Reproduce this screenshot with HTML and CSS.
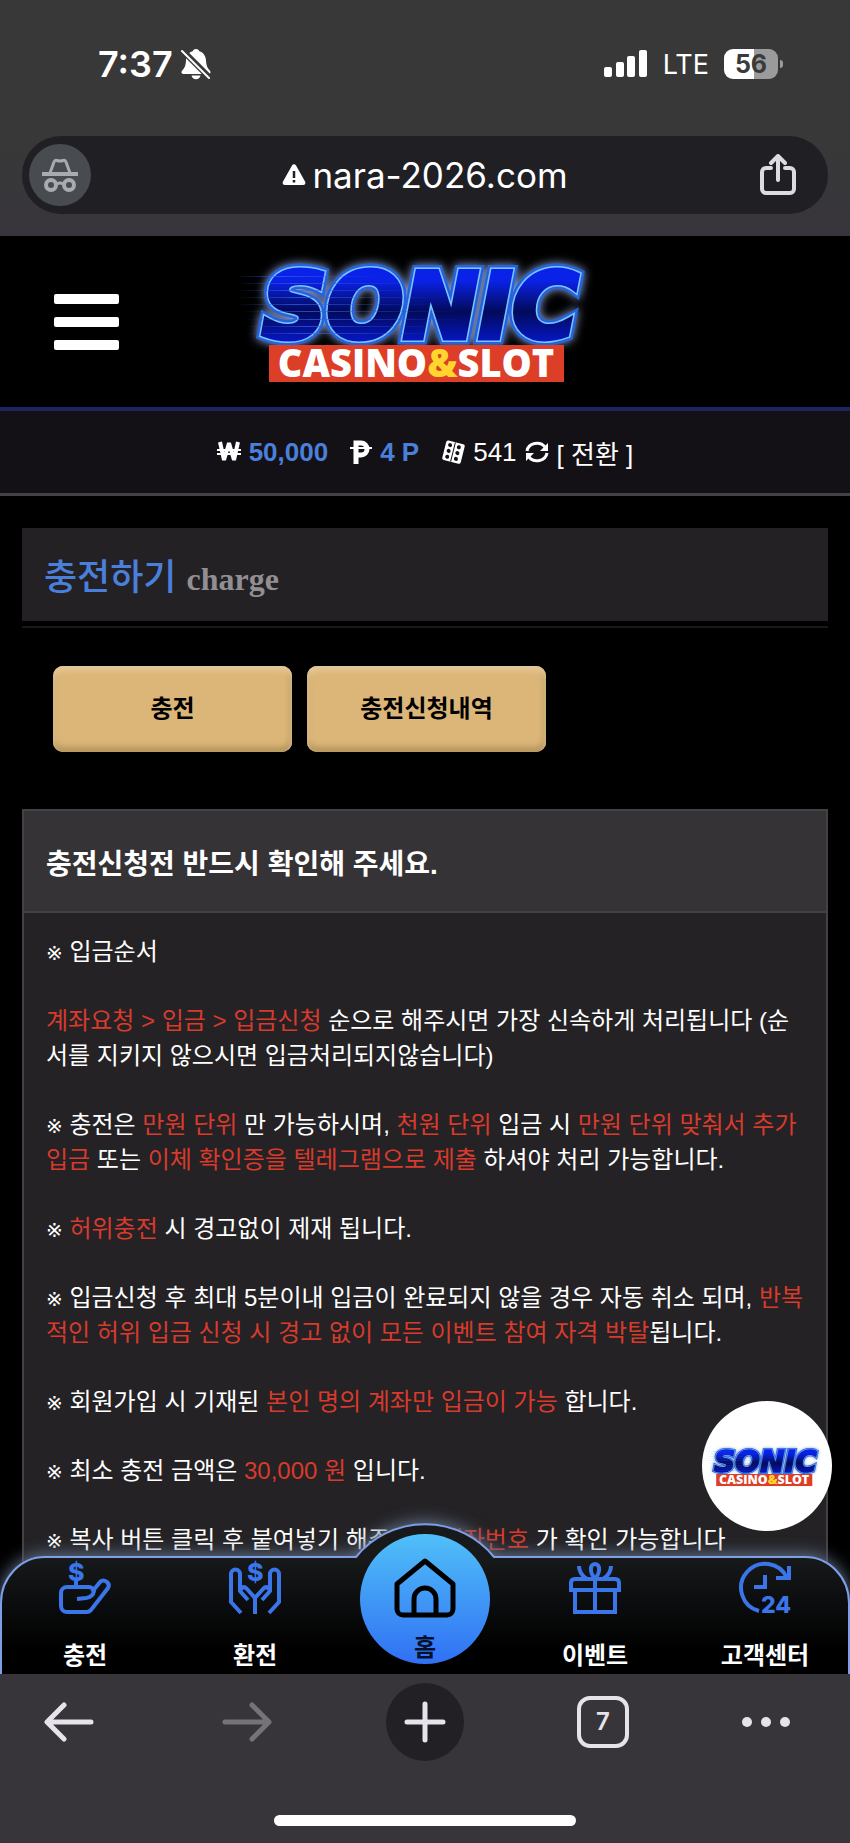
FILE: index.html
```html
<!DOCTYPE html>
<html lang="ko">
<head>
  <meta charset="UTF-8">
  <meta name="viewport" content="width=device-width, initial-scale=1.0">
  <title>충전하기</title>
  <link rel="stylesheet" href="styles.css">
</head>
<body>

<div class="phone">

  <div class="browser-top">
    <div class="status">
      <div class="status-left">
        <span>7:37</span>
        <svg width="30" height="32" viewBox="0 0 30 32">
          <path fill="#fff" d="M15 1c-2 0-3 1-3.300 2.300C7.500 4.600 5.200 8 5 12.500c-.2 5-1.400 7.500-3.600 9.800C-.3 24.200.5 26 2.500 26h25c2 0 2.800-1.800 1.100-3.700-2.200-2.300-3.400-4.800-3.600-9.800-.2-4.500-2.500-7.900-6.700-9.200C18 2 17 1 15 1zM10.500 27.500h9c-.4 2.300-2.200 3.800-4.500 3.800s-4.100-1.500-4.500-3.800z"/>
          <path stroke="#383838" stroke-width="6" d="M0 1L30 31"/>
          <path stroke="#fff" stroke-width="2" stroke-linecap="round" d="M1 3L28 30"/>
        </svg>
      </div>
      <div class="status-right">
        <svg width="44" height="28" viewBox="0 0 44 28" fill="#fff">
          <rect x="0" y="17" width="8" height="10" rx="2"/>
          <rect x="12" y="12" width="8" height="15" rx="2"/>
          <rect x="23" y="6" width="8" height="21" rx="2"/>
          <rect x="35" y="0" width="8" height="27" rx="2"/>
        </svg>
        <span class="lte">LTE</span>
        <span class="battery">56</span>
        <span class="battery-tip"></span>
      </div>
    </div>

    <div class="address">
      <span class="incognito">
        <svg width="38" height="36" viewBox="0 0 38 36" fill="none" stroke="#a9abae" stroke-width="3">
          <path d="M9 16l4-11c.5-1.500 1.500-2 3-1.500 2 .8 4 .8 6 0 1.500-.5 2.500 0 3 1.500l4 11"/>
          <path d="M1 17h36" stroke-width="4"/>
          <circle cx="10" cy="28" r="5" stroke-width="4"/>
          <circle cx="28" cy="28" r="5" stroke-width="4"/>
          <path d="M16 27q3-2 6 0"/>
        </svg>
      </span>
      <a class="url" href="#">
        <svg width="24" height="24" viewBox="0 0 24 24">
          <path fill="#fff" d="M10 2.500c1-1.700 3-1.700 4 0l9 16c1 1.900 0 3.500-2 3.500h-18c-2 0-3-1.600-2-3.500z"/>
          <path stroke="#201f24" stroke-width="2.500" d="M12 8v7M12 17v2.500"/>
        </svg>
        nara-2026.com
      </a>
      <button class="share" aria-label="공유">
        <svg width="38" height="42" viewBox="0 0 38 42" fill="none" stroke="#dcdbe0" stroke-width="4" stroke-linecap="round" stroke-linejoin="round">
          <path d="M12 14H7a4 4 0 0 0-4 4v17a4 4 0 0 0 4 4h24a4 4 0 0 0 4-4V18a4 4 0 0 0-4-4h-5M19 26V3M12 9l7-7 7 7"/>
        </svg>
      </button>
    </div>
  </div>

  <div class="site">
    <header class="site-header">
      <button class="menu" aria-label="메뉴"><i></i><i></i><i></i></button>
      <a class="logo" href="#" aria-label="SONIC CASINO&amp;SLOT">
        <svg width="380" height="132" viewBox="0 0 380 132">
          <defs>
            <linearGradient id="speed" x1="0" x2="1">
              <stop offset="0" stop-color="#2a4bd8" stop-opacity="0"/>
              <stop offset="0.300" stop-color="#3a62e8" stop-opacity="0.700"/>
              <stop offset="1" stop-color="#2a4bd8" stop-opacity="0"/>
            </linearGradient>
            <linearGradient id="sonic" x1="0" x2="0" y1="0" y2="1">
              <stop offset="0.250" stop-color="#0a22e8"/>
              <stop offset="0.550" stop-color="#020a5a"/>
              <stop offset="0.850" stop-color="#0618c8"/>
            </linearGradient>
            <symbol id="logo" viewBox="0 0 380 132">
              <text class="logo-sonic logo-glow" x="27" y="82">SONIC</text>
              <text class="logo-sonic logo-line" x="27" y="82">SONIC</text>
              <text class="logo-sonic" x="27" y="82" fill="url(#sonic)" stroke="url(#sonic)">SONIC</text>
              <g fill="url(#speed)">
                <rect x="0" y="20" width="150" height="1"/>
                <rect x="0" y="27" width="200" height="1"/>
                <rect x="0" y="34" width="190" height="1"/>
                <rect x="0" y="41" width="210" height="1"/>
                <rect x="0" y="48" width="200" height="1"/>
                <rect x="6" y="55" width="220" height="1"/>
                <rect x="10" y="63" width="220" height="1"/>
                <rect x="10" y="70" width="200" height="1"/>
                <rect x="10" y="77" width="200" height="1"/>
              </g>
              <rect x="34" y="89" width="295" height="37" fill="#dc3e28"/>
              <text class="logo-sub" x="181" y="121" text-anchor="middle">CASINO<tspan fill="#ffd52e">&amp;</tspan>SLOT</text>
            </symbol>
          </defs>
          <use href="#logo"/>
        </svg>
      </a>
    </header>

    <div class="balance">
      <svg width="24" height="22" viewBox="0 0 24 22" fill="none" stroke="#fff">
        <path stroke-width="4" stroke-linejoin="bevel" d="M3 1l4 18 5-17 5 17 4-18"/>
        <path stroke-width="2" d="M0 9h24M0 13h24"/>
      </svg>
      <b>50,000</b>
      <svg class="gap" width="22" height="24" viewBox="0 0 22 24" fill="none" stroke="#fff">
        <path stroke-width="5" d="M6 24V3h5a5 5 0 0 1 0 12H6"/>
        <path stroke-width="2" d="M0 8h22"/>
      </svg>
      <b>4 P</b>
      <svg class="gap" width="24" height="24" viewBox="0 0 24 24">
        <g transform="rotate(14 12 12)">
          <rect x="3" y="2" width="19" height="20" rx="2" fill="#fff"/>
          <path stroke="#141116" stroke-width="1" d="M12 2v20"/>
          <g fill="#141116">
            <circle cx="7.500" cy="6" r="2"/><circle cx="7.500" cy="12" r="2"/><circle cx="7.500" cy="18" r="2"/>
            <circle cx="16.500" cy="6" r="2"/><circle cx="16.500" cy="12" r="2"/><circle cx="16.500" cy="18" r="2"/>
          </g>
        </g>
      </svg>
      <span>541</span>
      <svg width="24" height="24" viewBox="0 0 24 24" fill="none" stroke="#fff" stroke-width="3">
        <path d="M2 11a10 9 0 0 1 18-4M22 13a10 9 0 0 1-18 4"/>
        <path fill="#fff" stroke="none" d="M23 3v8h-8zM1 21v-8h8z"/>
      </svg>
      <a href="#">[ 전환 ]</a>
    </div>

    <main>
      <h1 class="page-title">충전하기 <small>charge</small></h1>
      <div class="tabs">
        <button>충전</button>
        <button>충전신청내역</button>
      </div>

      <section class="notice">
        <h2>충전신청전 반드시 확인해 주세요.</h2>
        <div class="notice-body">
          <p><i>※</i> 입금순서</p>
          <p><em>계좌요청 &gt; 입금 &gt; 입금신청</em> 순으로 해주시면 가장 신속하게 처리됩니다 (순<br>서를 지키지 않으시면 입금처리되지않습니다)</p>
          <p><i>※</i> 충전은 <em>만원 단위</em> 만 가능하시며, <em>천원 단위</em> 입금 시 <em>만원 단위 맞춰서 추가<br>입금</em> 또는 <em>이체 확인증을 텔레그램으로 제출</em> 하셔야 처리 가능합니다.</p>
          <p><i>※</i> <em>허위충전</em> 시 경고없이 제재 됩니다.</p>
          <p><i>※</i> 입금신청 후 최대 5분이내 입금이 완료되지 않을 경우 자동 취소 되며, <em>반복<br>적인 허위 입금 신청 시 경고 없이 모든 이벤트 참여 자격 박탈</em>됩니다.</p>
          <p><i>※</i> 회원가입 시 기재된 <em>본인 명의 계좌만 입금이 가능</em> 합니다.</p>
          <p><i>※</i> 최소 충전 금액은 <em>30,000 원</em> 입니다.</p>
          <p><i>※</i> 복사 버튼 클릭 후 붙여넣기 해주셔야 <em>계좌번호</em> 가 확인 가능합니다</p>
        </div>
      </section>
    </main>

    <a class="badge" href="#" aria-label="SONIC CASINO&amp;SLOT">
      <svg width="124" height="43" viewBox="0 0 380 132"><use href="#logo"/></svg>
    </a>

    <nav class="dock">
      <svg class="dock-bg" viewBox="0 0 850 151" preserveAspectRatio="none">
        <defs>
          <linearGradient id="dock" x1="0" x2="0" y1="0" y2="1">
            <stop offset="0.200" stop-color="#17191b"/>
            <stop offset="0.800" stop-color="#000"/>
          </linearGradient>
        </defs>
        <path fill="url(#dock)" stroke="#7d9fe8" stroke-width="2" d="M1 160V80A44 46 0 0 1 45 34H356A89 89 0 0 1 494 34H805A44 46 0 0 1 849 80V160"/>
      </svg>
      <a href="#">
        <svg width="52" height="52" viewBox="0 0 52 52">
          <path d="M18 37l9-1q7-1 8-7q-1-4-6-4H8a6 6 0 0 0-6 6v13a6 6 0 0 0 6 6h20q2 0 4-2l17-22q2-3-1-6-4-3-7 0l-8 10M17 19v6"/>
          <text x="9" y="19" font-size="25">$</text>
        </svg>
        충전
      </a>
      <a href="#">
        <svg width="52" height="52" viewBox="0 0 52 52">
          <path d="M12 51L2 40V12a4 4 0 0 1 9 0v17l8 9M11 28l2-2q2-2 5 1l8 9v16"/>
          <path d="M40 51l10-11V12a4 4 0 0 0-9 0v17l-8 9M41 28l-2-2q-2-2-5 1l-8 9"/>
          <text x="18" y="19" font-size="25">$</text>
        </svg>
        환전
      </a>
      <a class="home" href="#">
        <span>
          <svg width="62" height="60" viewBox="0 0 62 60">
            <path d="M31 3L3 26v25a6 6 0 0 0 6 6h44a6 6 0 0 0 6-6V26zM20 57V41a11 11 0 0 1 22 0v16"/>
          </svg>
          홈
        </span>
      </a>
      <a href="#">
        <svg width="52" height="52" viewBox="0 0 52 52">
          <path d="M6 17h40q4 0 4 4v7H2v-7q0-4 4-4zM6 28v22h40V28M26 17v33"/>
          <path d="M26 16c-5-4-6-14 0-14s5 10 0 14zM10 4q0 8 8 13M42 4q0 8-8 13"/>
        </svg>
        이벤트
      </a>
      <a href="#">
        <svg width="52" height="52" viewBox="0 0 52 52">
          <path d="M20 49A24 24 0 1 1 48 16M50 4v12H37M26 13v12H15"/>
          <text x="22" y="51" font-size="23">24</text>
        </svg>
        고객센터
      </a>
    </nav>
  </div>

  <div class="toolbar">
    <div class="toolbar-row">
      <button aria-label="뒤로">
        <svg width="50" height="42" viewBox="0 0 50 42"><path d="M47 21H4M20 4L3 21l17 17"/></svg>
      </button>
      <button aria-label="앞으로" disabled>
        <svg width="50" height="42" viewBox="0 0 50 42"><path d="M3 21h43M30 4l17 17-17 17"/></svg>
      </button>
      <button aria-label="새 탭">
        <span class="plus"><svg width="42" height="42" viewBox="0 0 42 42"><path d="M21 3v36M3 21h36"/></svg></span>
      </button>
      <button aria-label="탭 7개"><span class="tab-count">7</span></button>
      <button class="more" aria-label="더보기">
        <svg width="50" height="12" viewBox="0 0 50 12" fill="#e6e4ea"><circle cx="6" cy="6" r="5"/><circle cx="25" cy="6" r="5"/><circle cx="44" cy="6" r="5"/></svg>
      </button>
    </div>
    <div class="home-bar"></div>
  </div>

</div>

</body>
</html>
```

FILE: styles.css
```css
* {
  box-sizing: border-box;
}
body {
  margin: 0;
  background: #000;
  color: #fff;
  font-family: "Liberation Sans", "Noto Sans CJK KR", sans-serif;
  font-size: 24px;
}
a {
  color: inherit;
  text-decoration: none;
}
button {
  padding: 0;
  border: 0;
  background: none;
  color: inherit;
  font: inherit;
}
svg {
  display: block;
  flex: none;
}
.phone {
  display: flex;
  flex-direction: column;
  height: 100vh;
}

/* browser top */
.browser-top {
  flex: none;
  height: 236px;
  padding: 40px 22px 22px;
  background: linear-gradient(#383838 60%, #37353b);
  font-family: Inter, "Noto Sans CJK KR", sans-serif;
}
.status {
  display: flex;
  justify-content: space-between;
  height: 96px;
  padding: 0 45px 0 76px;
}
.status-left, .status-right {
  display: flex;
  align-items: center;
  height: 48px;
}
.status-left {
  gap: 8px;
  font-size: 36px;
  font-weight: 600;
}
.lte {
  margin: 0 15px;
  font-size: 27px;
  font-weight: 400;
}
.battery {
  width: 54px;
  height: 30px;
  border-radius: 9px;
  background: linear-gradient(90deg, #fff 56%, #9b9b9b 56%);
  color: #3a3a3a;
  font-size: 25px;
  font-weight: 700;
  line-height: 30px;
  text-align: center;
}
.battery-tip {
  width: 3px;
  height: 8px;
  margin-left: 2px;
  border-radius: 0 4px 4px 0;
  background: #9b9b9b;
}
.address {
  display: flex;
  align-items: center;
  justify-content: space-between;
  height: 78px;
  padding: 0 31px 0 7px;
  border-radius: 39px;
  background: #201f24;
}
.incognito {
  display: flex;
  align-items: center;
  justify-content: center;
  width: 62px;
  height: 62px;
  border-radius: 50%;
  background: #484b50;
}
.url {
  display: flex;
  align-items: center;
  gap: 6px;
  font-size: 35px;
}

/* site */
.site {
  position: relative;
  flex: 1;
  min-height: 0;
  overflow: hidden;
}
.site-header {
  display: grid;
  grid-template-columns: 1fr auto 1fr;
  align-items: center;
  height: 175px;
  padding: 0 54px;
  border-bottom: 4px solid #1c265c;
}
.menu {
  display: flex;
  flex-direction: column;
  gap: 13px;
  width: 65px;
}
.menu i {
  height: 10px;
  border-radius: 2px;
  background: #fff;
}
.logo svg, .badge svg {
  overflow: visible;
}
#logo {
  overflow: visible;
}
.logo-sonic {
  font-family: "DejaVu Sans", sans-serif;
  font-size: 90px;
  font-style: italic;
  font-weight: 700;
  stroke-width: 5px;
}
.logo-line {
  fill: #7cc4ff;
  stroke: #7cc4ff;
  stroke-width: 8px;
}
.logo-glow {
  fill: #2563dc;
  stroke: #2563dc;
  stroke-width: 13px;
  filter: drop-shadow(0 0 5px #8fa4dc);
}
.logo-sub {
  fill: #fff;
  font-family: "Open Sans", sans-serif;
  font-size: 38px;
  font-weight: 800;
}
.balance {
  display: flex;
  align-items: center;
  justify-content: center;
  gap: 8px;
  height: 85px;
  border-bottom: 3px solid #434245;
  background: #141116;
  font-size: 26px;
}
.balance b {
  color: #4a80dc;
}
.balance .gap {
  margin-left: 14px;
}
main {
  padding: 32px 22px 0;
}
.page-title {
  height: 93px;
  margin: 0 0 45px;
  padding-left: 22px;
  background: #242125;
  box-shadow: 0 5px #000, 0 7px #19181a;
  color: #4a80dc;
  font-size: 36px;
  font-weight: 500;
  line-height: 99px;
}
.page-title small {
  color: #918f93;
  font-family: "Liberation Serif", serif;
  font-size: 32px;
  font-weight: 700;
}
.tabs {
  display: flex;
  gap: 15px;
  margin-bottom: 57px;
  padding-left: 31px;
}
.tabs button {
  width: 239px;
  height: 86px;
  padding-bottom: 6px;
  border-radius: 10px;
  background: #dcb678;
  box-shadow: inset 0 4px 6px #e8cda0, inset 0 -5px 6px #b3955c, inset -3px 0 5px #c2a165;
  color: #000;
  font-weight: 700;
}
.notice {
  border: 2px solid #434145;
  background: #242225;
}
.notice h2 {
  height: 102px;
  margin: 0;
  padding-left: 22px;
  border-bottom: 2px solid #434145;
  background: #353336;
  font-size: 28px;
  font-weight: 700;
  line-height: 107px;
}
.notice-body {
  padding: 21px 0 130px 22px;
  line-height: 35px;
  white-space: nowrap;
}
.notice p {
  margin: 0 0 34px;
}
.notice em {
  color: #d83a2c;
  font-style: normal;
}
.notice p i {
  font-family: "DejaVu Sans", sans-serif;
  font-size: 20px;
  font-style: normal;
  line-height: 1;
}

.badge {
  position: absolute;
  right: 18px;
  bottom: 143px;
  display: flex;
  align-items: center;
  justify-content: center;
  width: 130px;
  height: 130px;
  border-radius: 50%;
  background: #fff;
}
.dock {
  position: absolute;
  right: 0;
  bottom: 0;
  left: 0;
  display: grid;
  grid-template-columns: repeat(5, 1fr);
  height: 151px;
  font-weight: 700;
}
.dock-bg {
  position: absolute;
  width: 100%;
  height: 151px;
  overflow: visible;
  filter: drop-shadow(0 -2px 8px #5f7089);
}
.dock a {
  position: relative;
  display: flex;
  flex-direction: column;
  align-items: center;
  gap: 24px;
  padding-top: 39px;
  line-height: 36px;
}
.dock a svg {
  overflow: visible;
}
.dock a path {
  fill: none;
  stroke: #3a76ea;
  stroke-width: 4px;
}
.dock text {
  fill: #3a76ea;
  font-family: Inter, sans-serif;
  font-weight: 800;
}
.dock .home {
  padding-top: 11px;
}
.home span {
  display: flex;
  flex-direction: column;
  align-items: center;
  gap: 12px;
  width: 130px;
  height: 130px;
  padding-top: 24px;
  border-radius: 50%;
  background: linear-gradient(#50c0f8, #3070f4);
  color: #04102e;
}
.home span path {
  stroke: #000;
  stroke-width: 5px;
  stroke-linejoin: round;
}

/* browser bottom */
.toolbar {
  flex: none;
  height: 169px;
  padding: 8px 25px 0;
  background: #37353a;
}
.toolbar-row {
  display: flex;
  justify-content: space-between;
  height: 80px;
}
.toolbar button {
  display: flex;
  align-items: center;
  justify-content: center;
  width: 88px;
}
.toolbar path {
  fill: none;
  stroke: #e6e4ea;
  stroke-width: 5px;
  stroke-linecap: round;
  stroke-linejoin: round;
}
.toolbar button:disabled path {
  stroke: #757378;
}
.toolbar .more {
  justify-content: flex-start;
  padding-left: 4px;
}
.plus {
  display: flex;
  align-items: center;
  justify-content: center;
  width: 78px;
  height: 78px;
  border-radius: 50%;
  background: #221f25;
}
.tab-count {
  width: 52px;
  height: 52px;
  border: 4px solid #e6e4ea;
  border-radius: 13px;
  color: #e6e4ea;
  font-family: Inter, sans-serif;
  font-weight: 600;
  line-height: 44px;
}
.home-bar {
  width: 302px;
  height: 11px;
  margin: 53px auto 0;
  border-radius: 6px;
  background: #fff;
}
```
